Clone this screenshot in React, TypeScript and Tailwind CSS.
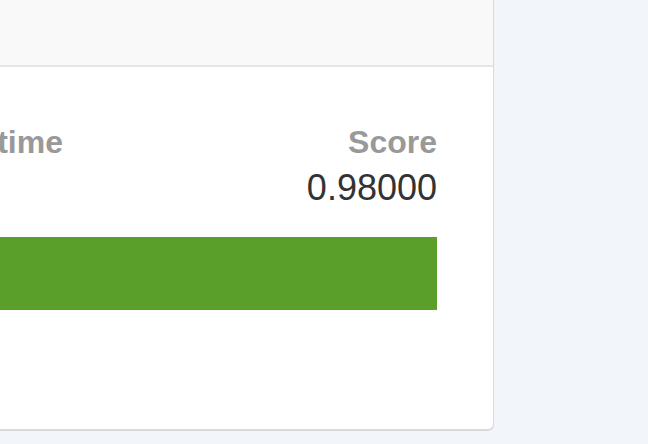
import React from 'react';

const App: React.FC = () => {
  const score = 0.98;

  return (
    <div className="w-[648px] h-[444px] overflow-hidden bg-[#f2f5f9] font-['Liberation_Sans',Arial,sans-serif]">
      <div className="ml-[-300px] mt-[-10px] w-[794px] h-[440px] flex flex-col bg-white border border-[#d6d9dd] rounded-b-md shadow-[0_1px_0_#d6d9dd]">
        <div className="h-[76px] bg-[#f9f9f9] border-b-2 border-[#e6e6e6]" />
        <div className="flex-1 pl-[234px] pr-[56px] pt-[56px]">
          <div className="flex justify-between">
            <div className="text-[32px] leading-[38px] font-bold text-[#999999]">Runtime</div>
            <div className="flex flex-col items-end">
              <div className="text-[32px] leading-[38px] font-bold text-[#999999]">Score</div>
              <div className="mt-[6px] text-[36px] leading-[42px] text-[#333333]">{score.toFixed(5)}</div>
            </div>
          </div>
          <div className="ml-[-234px] mt-[28px] h-[73px] bg-[#5a9f2a]" />
        </div>
      </div>
    </div>
  );
};

export default App;
